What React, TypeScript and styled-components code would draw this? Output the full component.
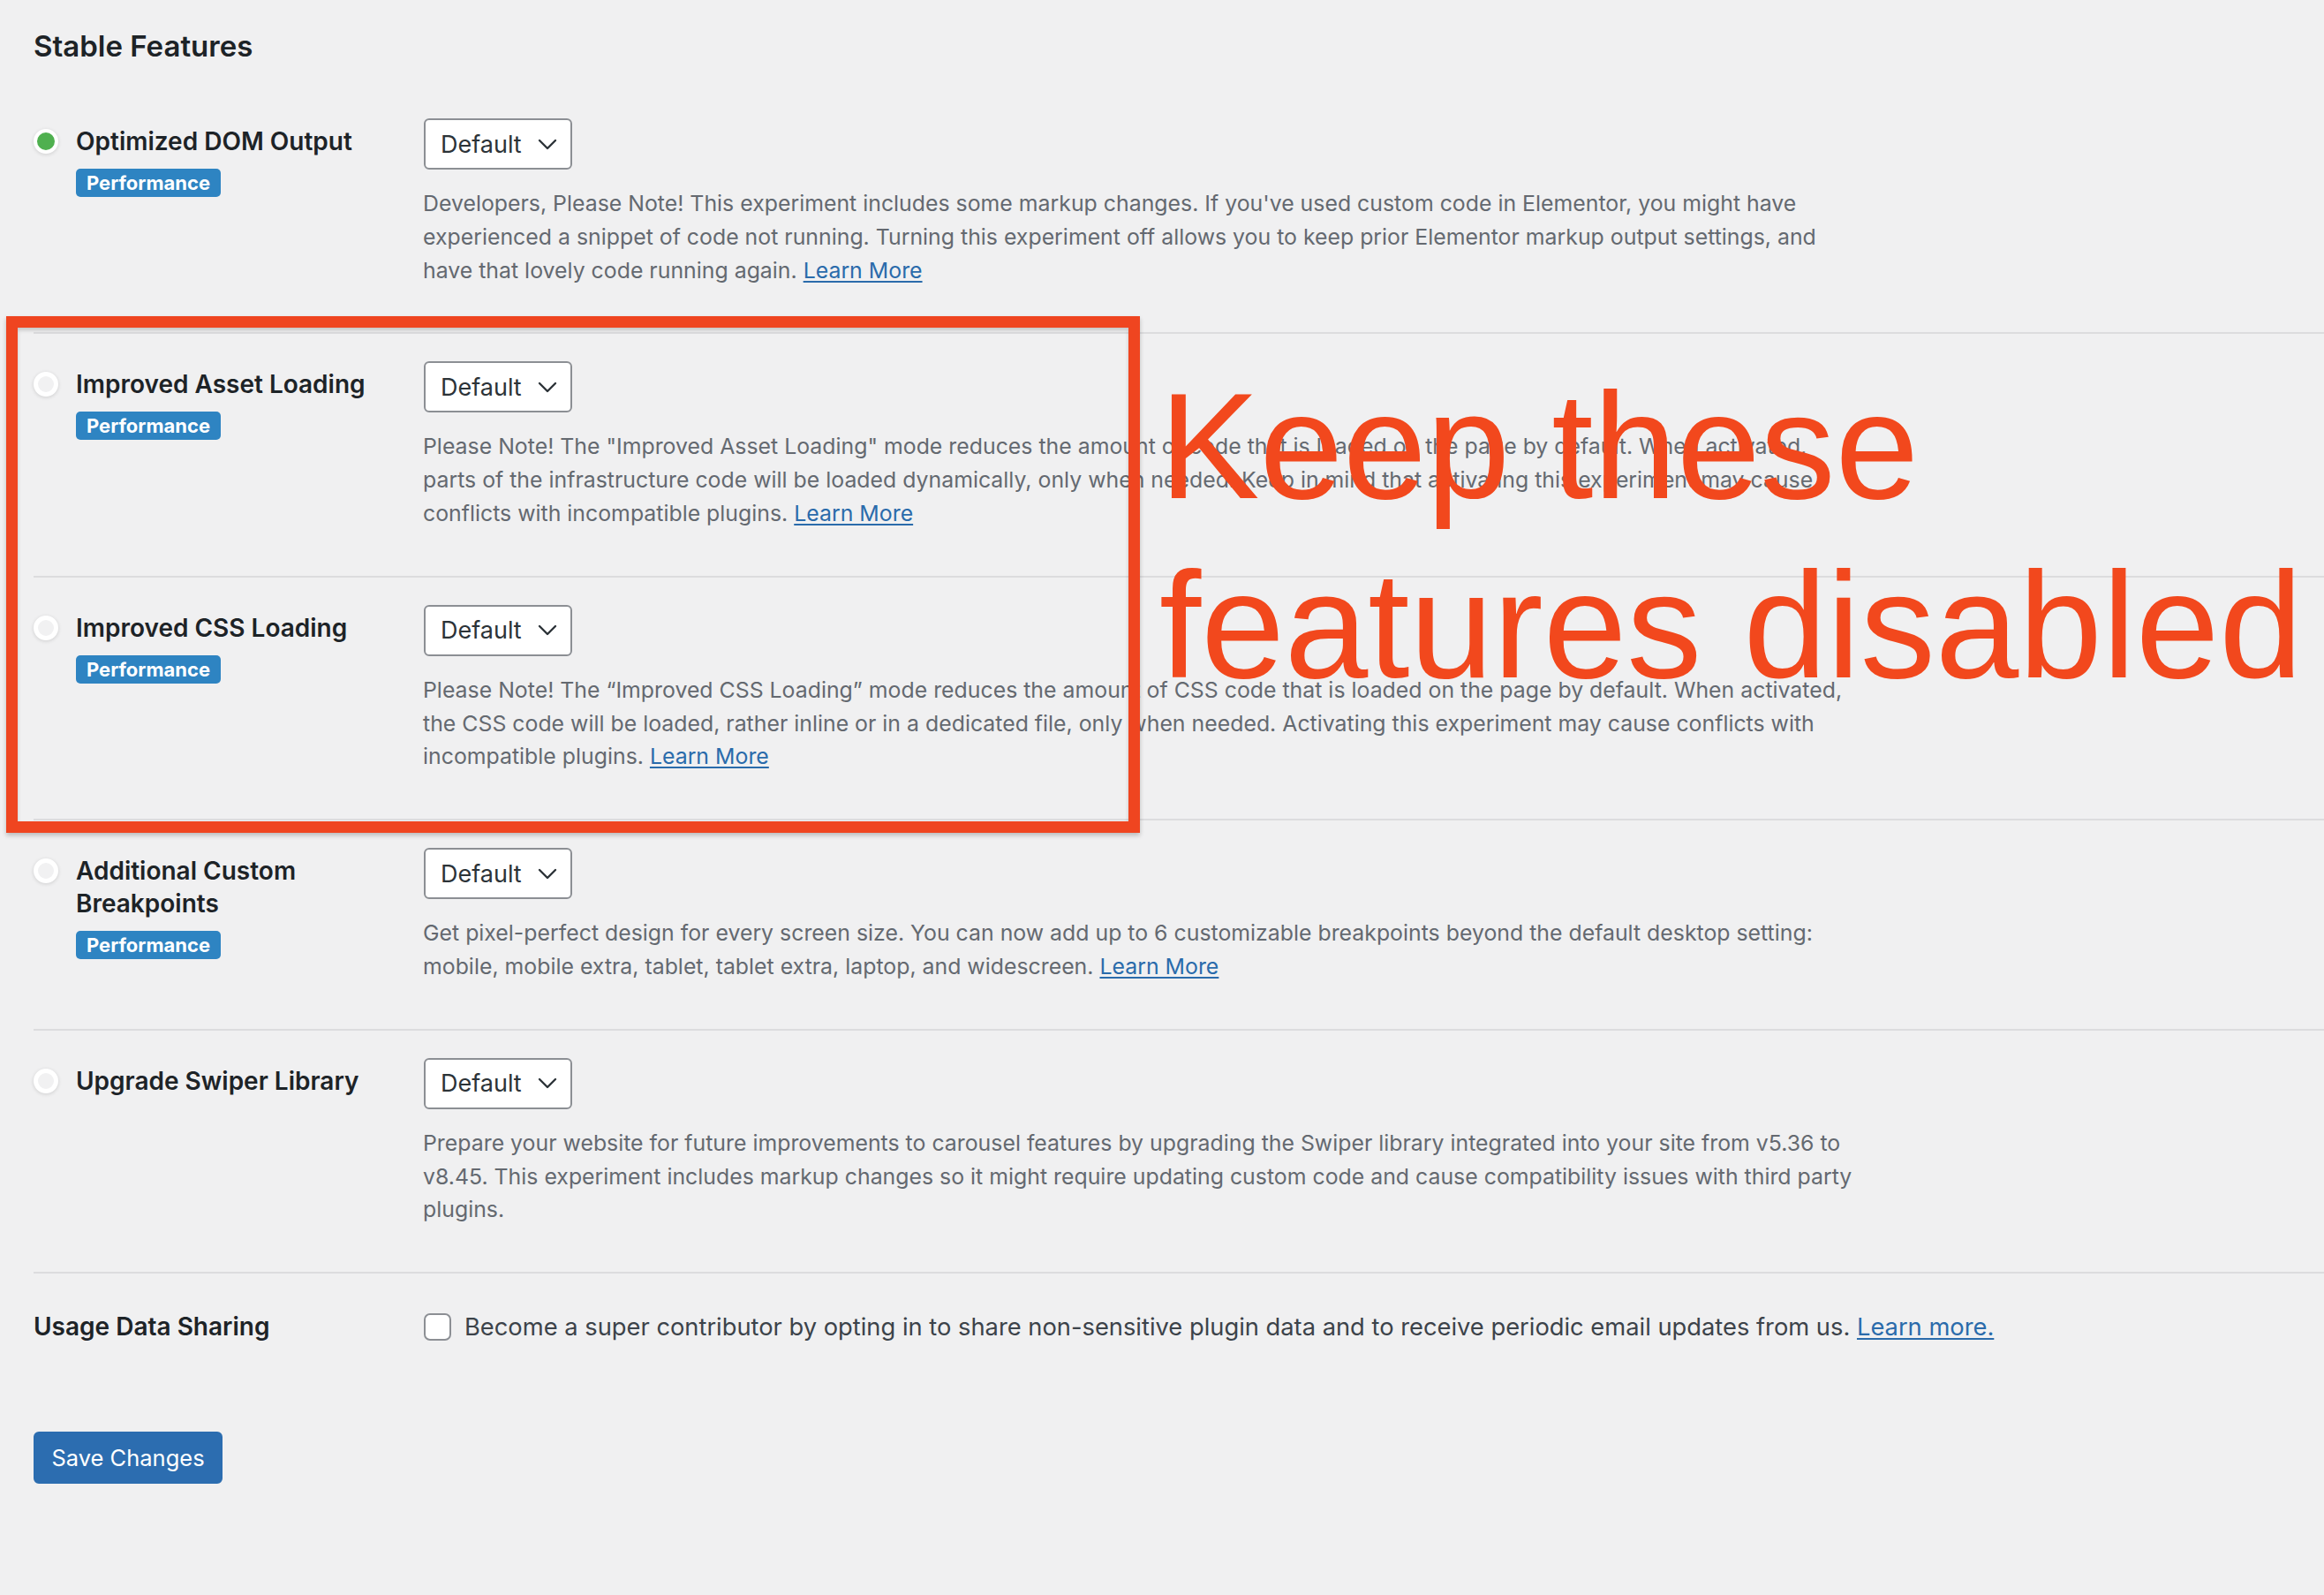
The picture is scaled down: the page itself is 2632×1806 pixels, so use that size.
import { FC, Fragment } from 'react';
import styled, { createGlobalStyle } from 'styled-components';

const GlobalStyle = createGlobalStyle`
  html, body {
    margin: 0;
    padding: 0;
    background: #f0f0f1;
  }
  body {
    font-family: Inter, "Liberation Sans", sans-serif;
    color: #1d2327;
  }
`;

interface Feature {
  name: string;
  active: boolean;
  tag?: string;
  lines: string[];
  link?: boolean;
}

const features: Feature[] = [
  {
    name: 'Optimized DOM Output',
    active: true,
    tag: 'Performance',
    lines: [
      "Developers, Please Note! This experiment includes some markup changes. If you've used custom code in Elementor, you might have",
      'experienced a snippet of code not running. Turning this experiment off allows you to keep prior Elementor markup output settings, and',
      'have that lovely code running again. ',
    ],
    link: true,
  },
  {
    name: 'Improved Asset Loading',
    active: false,
    tag: 'Performance',
    lines: [
      'Please Note! The "Improved Asset Loading" mode reduces the amount of code that is loaded on the page by default. When activated,',
      'parts of the infrastructure code will be loaded dynamically, only when needed. Keep in mind that activating this experiment may cause',
      'conflicts with incompatible plugins. ',
    ],
    link: true,
  },
  {
    name: 'Improved CSS Loading',
    active: false,
    tag: 'Performance',
    lines: [
      'Please Note! The \u201cImproved CSS Loading\u201d mode reduces the amount of CSS code that is loaded on the page by default. When activated,',
      'the CSS code will be loaded, rather inline or in a dedicated file, only when needed. Activating this experiment may cause conflicts with',
      'incompatible plugins. ',
    ],
    link: true,
  },
  {
    name: 'Additional Custom Breakpoints',
    active: false,
    tag: 'Performance',
    lines: [
      'Get pixel-perfect design for every screen size. You can now add up to 6 customizable breakpoints beyond the default desktop setting:',
      'mobile, mobile extra, tablet, tablet extra, laptop, and widescreen. ',
    ],
    link: true,
  },
  {
    name: 'Upgrade Swiper Library',
    active: false,
    lines: [
      'Prepare your website for future improvements to carousel features by upgrading the Swiper library integrated into your site from v5.36 to',
      'v8.45. This experiment includes markup changes so it might require updating custom code and cause compatibility issues with third party',
      'plugins.',
    ],
  },
];

const Page = styled.div`
  position: relative;
  width: 2632px;
  min-height: 1806px;
  padding-left: 38px;
  box-sizing: border-box;
  overflow: hidden;
`;

const Heading = styled.h2`
  margin: 0;
  padding-top: 30px;
  font-size: 33px;
  line-height: 44px;
  font-weight: 600;
  color: #1d2327;
`;

const FeatureList = styled.div`
  margin-top: 29px;
`;

const Row = styled.div<{ $first?: boolean }>`
  display: grid;
  grid-template-columns: 442px 1fr;
  padding: 31px 0 51px;
  border-top: ${p => (p.$first ? 'none' : '2px solid #dcdcde')};
`;

const Label = styled.div`
  display: flex;
  gap: 20px;
  padding-top: 8px;
`;

const Dot = styled.span<{ $active: boolean }>`
  flex: none;
  width: 28px;
  height: 28px;
  margin-top: 4px;
  box-sizing: border-box;
  border-radius: 50%;
  border: ${p => (p.$active ? '4px' : '5px')} solid #fff;
  background: ${p => (p.$active ? '#4fb04f' : '#f1f1f2')};
  box-shadow: 0 1px 4px rgba(0, 0, 0, 0.14);
`;

const LabelText = styled.div`
  display: flex;
  flex-direction: column;
  align-items: flex-start;
`;

const Title = styled.div`
  max-width: 345px;
  font-size: 28px;
  line-height: 37px;
  font-weight: 600;
  color: #1d2327;
`;

const Tag = styled.span`
  margin-top: 12px;
  height: 32px;
  padding: 0 12px;
  border-radius: 5px;
  background: #2e84c2;
  color: #fff;
  font-size: 22px;
  font-weight: 700;
  line-height: 32px;
`;

const Control = styled.div`
  display: flex;
  flex-direction: column;
  align-items: flex-start;
`;

const SelectBox = styled.div`
  width: 168px;
  height: 58px;
  box-sizing: border-box;
  display: flex;
  align-items: center;
  justify-content: space-between;
  padding: 0 15px 0 17px;
  border: 2px solid #8c8f94;
  border-radius: 6px;
  background: #fff;
  font-size: 27px;
  color: #2c3338;
`;

const Description = styled.p`
  margin: 20px 0 0 -1px;
  font-size: 24.85px;
  line-height: 37.8px;
  color: #646970;
  white-space: nowrap;
`;

const Link = styled.a`
  color: #2a6bab;
  text-decoration: underline;
  text-underline-offset: 3px;
`;

const UsageRow = styled.div`
  display: grid;
  grid-template-columns: 442px 1fr;
  align-items: center;
  padding-top: 42px;
  border-top: 2px solid #dcdcde;
`;

const UsageLabel = styled.div`
  font-size: 28px;
  line-height: 37px;
  font-weight: 600;
  color: #1d2327;
`;

const CheckRow = styled.label`
  display: flex;
  align-items: center;
  gap: 15px;
  font-size: 27.3px;
  line-height: 37px;
  color: #3c434a;
  white-space: nowrap;
`;

const CheckBox = styled.span`
  flex: none;
  width: 31px;
  height: 31px;
  box-sizing: border-box;
  border: 2.5px solid #8c8f94;
  border-radius: 7px;
  background: #fff;
`;

const SaveButton = styled.button`
  margin-top: 100px;
  width: 214px;
  height: 59px;
  padding: 0;
  border: 2px solid #2c6db0;
  border-radius: 6px;
  background: #2c6db0;
  color: #fff;
  font-family: Inter, "Liberation Sans", sans-serif;
  font-size: 25.5px;
`;

const MarkBox = styled.div`
  position: absolute;
  left: 7px;
  top: 358px;
  width: 1284px;
  height: 585px;
  box-sizing: border-box;
  border: 13px solid #ef4520;
  box-shadow: 0 3px 5px rgba(0, 0, 0, 0.22), inset 0 3px 4px rgba(0, 0, 0, 0.18);
  pointer-events: none;
`;

const MarkText = styled.div`
  position: absolute;
  left: 1313px;
  top: 404px;
  font-family: "Liberation Sans", Arial, sans-serif;
  font-size: 170px;
  line-height: 203px;
  color: #f2481d;
  white-space: nowrap;
  pointer-events: none;
`;

const Chevron: FC = () => (
  <svg width="22" height="13" viewBox="0 0 22 13">
    <path d="M2 2 L11 11 L20 2" fill="none" stroke="#2c3338" strokeWidth="2.4" strokeLinecap="round" strokeLinejoin="round" />
  </svg>
);

const FeatureRow: FC<{ feature: Feature; first: boolean }> = ({ feature, first }) => (
  <Row $first={first}>
    <Label>
      <Dot $active={feature.active} />
      <LabelText>
        <Title>{feature.name}</Title>
        {feature.tag && <Tag>{feature.tag}</Tag>}
      </LabelText>
    </Label>
    <Control>
      <SelectBox>
        <span>Default</span>
        <Chevron />
      </SelectBox>
      <Description>
        {feature.lines.map((line, i) => (
          <Fragment key={i}>
            {line}
            {i < feature.lines.length - 1 && <br />}
          </Fragment>
        ))}
        {feature.link && <Link href="#">Learn More</Link>}
      </Description>
    </Control>
  </Row>
);

const App: FC = () => {
  return (
    <>
      <GlobalStyle />
      <Page>
        <Heading>Stable Features</Heading>
        <FeatureList>
          {features.map((f, i) => (
            <FeatureRow key={f.name} feature={f} first={i === 0} />
          ))}
        </FeatureList>
        <UsageRow>
          <UsageLabel>Usage Data Sharing</UsageLabel>
          <CheckRow>
            <CheckBox />
            <span>
              Become a super contributor by opting in to share non-sensitive plugin data and to receive periodic email updates from us.{' '}
              <Link href="#">Learn more.</Link>
            </span>
          </CheckRow>
        </UsageRow>
        <SaveButton type="button">Save Changes</SaveButton>
        <MarkBox />
        <MarkText>
          Keep these
          <br />
          features disabled
        </MarkText>
      </Page>
    </>
  );
};

export default App;
